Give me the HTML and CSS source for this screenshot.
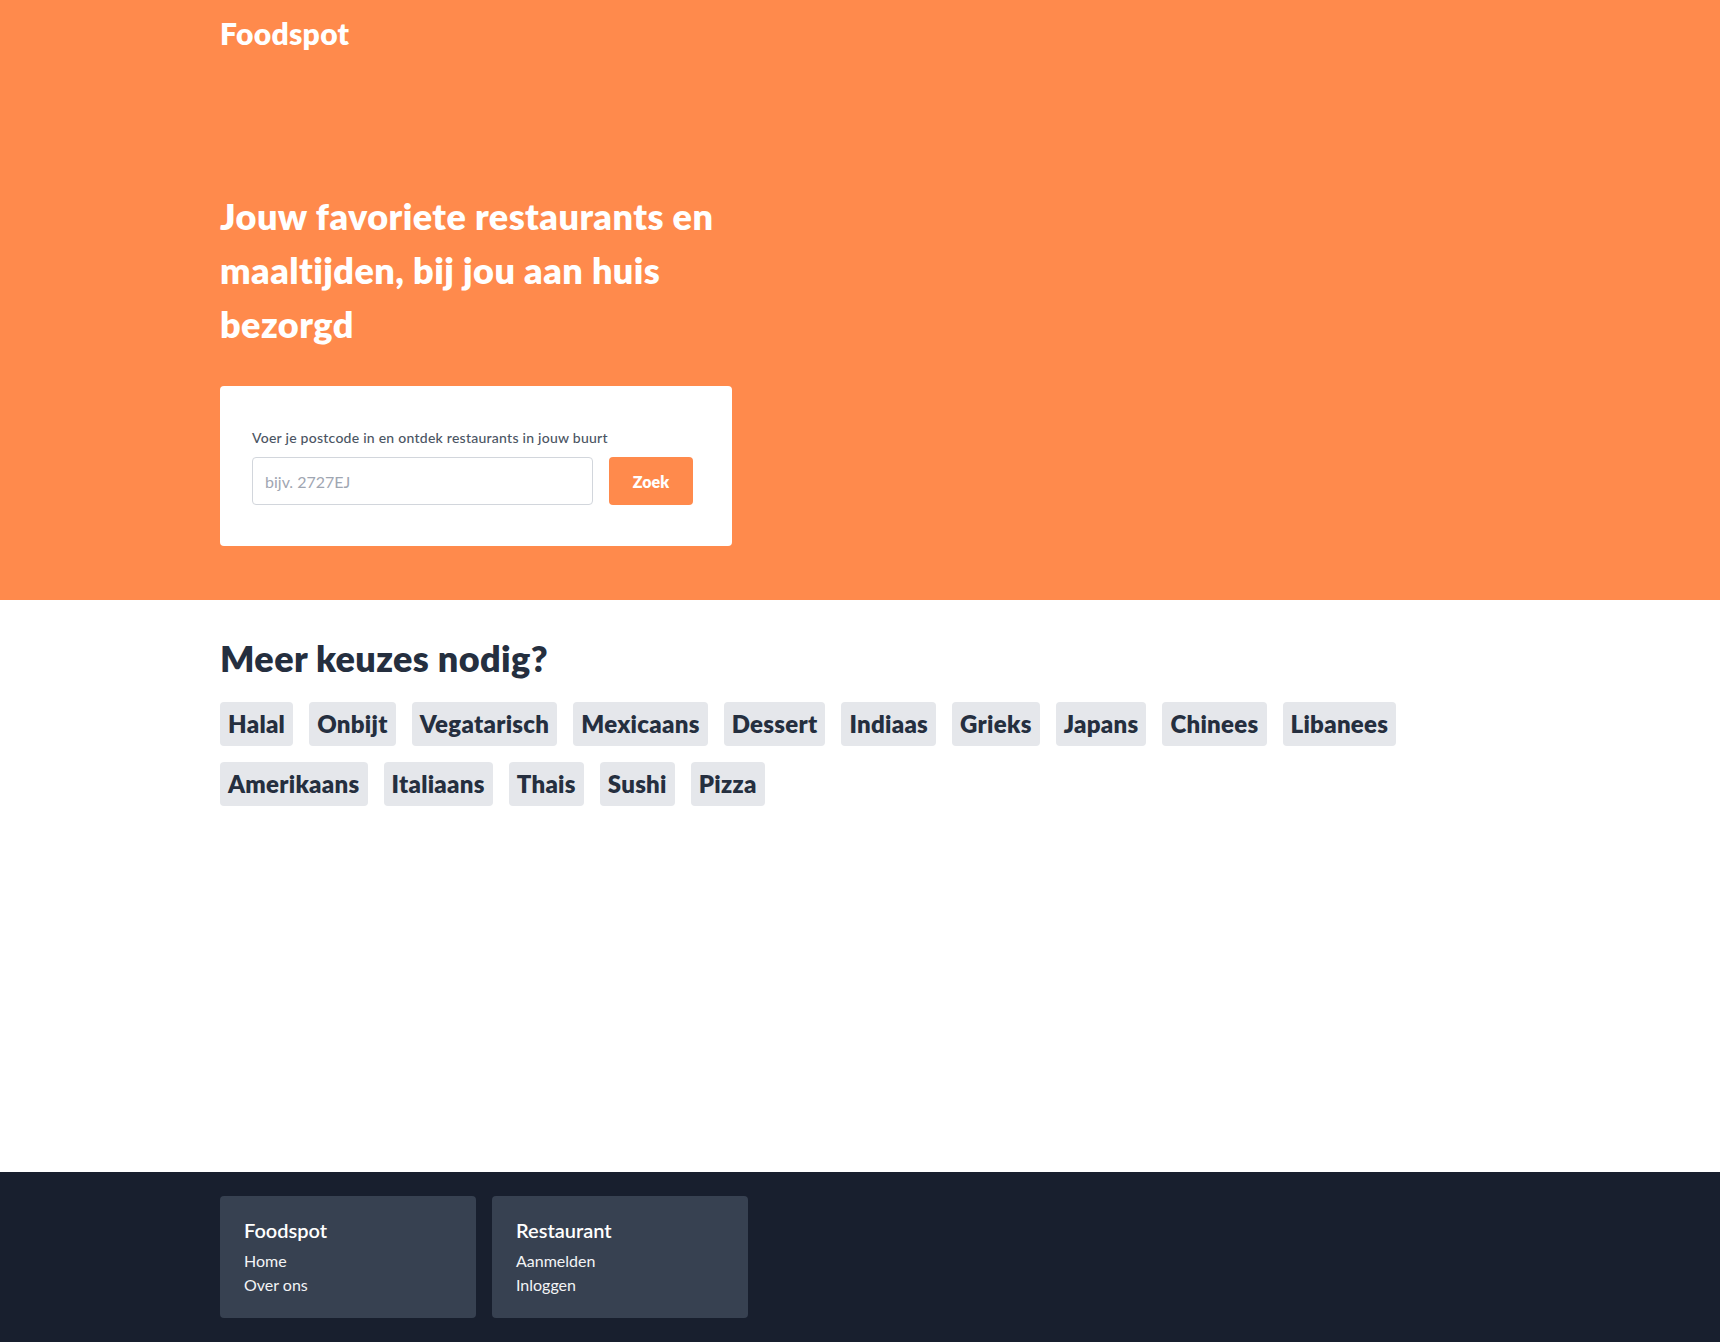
FILE: index.html
```html
<!DOCTYPE html>
<html lang="nl">
<head>
<meta charset="utf-8">
<title>Foodspot</title>
<link rel="stylesheet" href="styles.css">
</head>
<body>
<div class="page">
  <header class="hero">
    <div class="container">
      <div class="logo">Foodspot</div>
      <div class="intro">
        <h1 class="hero-title">Jouw favoriete restaurants en maaltijden, bij jou aan huis bezorgd</h1>
        <form class="search-card">
          <label class="search-label" for="postcode">Voer je postcode in en ontdek restaurants in jouw buurt</label>
          <div class="search-row">
            <input class="search-input" id="postcode" type="text" placeholder="bijv. 2727EJ">
            <button class="search-button" type="button">Zoek</button>
          </div>
        </form>
      </div>
    </div>
  </header>

  <main class="main">
    <div class="container">
      <h2 class="section-title">Meer keuzes nodig?</h2>
      <div class="tags">
        <span class="tag">Halal</span>
        <span class="tag">Onbijt</span>
        <span class="tag">Vegatarisch</span>
        <span class="tag">Mexicaans</span>
        <span class="tag">Dessert</span>
        <span class="tag">Indiaas</span>
        <span class="tag">Grieks</span>
        <span class="tag">Japans</span>
        <span class="tag">Chinees</span>
        <span class="tag">Libanees</span>
        <span class="tag">Amerikaans</span>
        <span class="tag">Italiaans</span>
        <span class="tag">Thais</span>
        <span class="tag">Sushi</span>
        <span class="tag">Pizza</span>
      </div>
    </div>
  </main>

  <footer class="footer">
    <div class="container footer-grid">
      <div class="footer-card">
        <div class="footer-title">Foodspot</div>
        <a class="footer-link" href="#">Home</a>
        <a class="footer-link" href="#">Over ons</a>
      </div>
      <div class="footer-card">
        <div class="footer-title">Restaurant</div>
        <a class="footer-link" href="#">Aanmelden</a>
        <a class="footer-link" href="#">Inloggen</a>
      </div>
    </div>
  </footer>
</div>
</body>
</html>
```

FILE: styles.css
```css
* {
  box-sizing: border-box;
}

html, body {
  margin: 0;
  padding: 0;
}

body {
  font-family: "Lato", "Liberation Sans", sans-serif;
  color: #252f3f;
  background: #ffffff;
}

.page {
  min-height: 100vh;
  display: flex;
  flex-direction: column;
}

.container {
  width: 1280px;
  margin: 0 auto;
}

/* Hero */
.hero {
  background: #ff8a4c;
  padding: 15px 0 54px;
}

.logo {
  color: #ffffff;
  font-size: 30px;
  line-height: 36px;
  font-weight: 800;
  letter-spacing: 0.01em;
}

.intro {
  padding-top: 138px;
}

.hero-title {
  margin: 0;
  max-width: 512px;
  color: #ffffff;
  font-size: 36px;
  line-height: 54px;
  font-weight: 800;
  letter-spacing: 0.012em;
}

.search-card {
  margin-top: 35px;
  width: 512px;
  background: #ffffff;
  border-radius: 4px;
  padding: 42px 39px 41px 32px;
}

.search-label {
  display: block;
  font-size: 14px;
  line-height: 20px;
  font-weight: 500;
  color: #4b5563;
  margin-bottom: 9px;
  letter-spacing: 0.018em;
}

.search-row {
  display: flex;
  gap: 16px;
}

.search-input {
  flex: 1;
  min-width: 0;
  height: 48px;
  border: 1px solid #d2d6dc;
  border-radius: 4px;
  padding: 0 12px;
  font-family: inherit;
  font-size: 16px;
  color: #252f3f;
  outline: none;
}

.search-input::placeholder {
  color: #9fa6b2;
}

.search-button {
  width: 84px;
  height: 48px;
  border: 0;
  border-radius: 4px;
  background: #ff8a4c;
  color: #ffffff;
  font-family: inherit;
  font-size: 16px;
  font-weight: 800;
  cursor: pointer;
}

/* Main */
.main {
  flex: 1;
  padding-top: 38px;
}

.section-title {
  margin: 0 0 24px;
  font-size: 36px;
  line-height: 40px;
  font-weight: 800;
  letter-spacing: 0.01em;
  color: #252f3f;
}

.tags {
  display: flex;
  flex-wrap: wrap;
  gap: 16px;
}

.tag {
  background: #e5e7eb;
  border-radius: 4px;
  padding: 6px 8px;
  font-size: 24px;
  line-height: 32px;
  font-weight: 800;
  letter-spacing: 0.012em;
  color: #252f3f;
}

/* Footer */
.footer {
  background: #181f2e;
  padding: 24px 0;
}

.footer-grid {
  display: flex;
  gap: 16px;
}

.footer-card {
  width: 256px;
  background: #374151;
  border-radius: 4px;
  padding: 20px 24px 21px;
  display: flex;
  flex-direction: column;
}

.footer-title {
  color: #ffffff;
  font-size: 20px;
  line-height: 28px;
  font-weight: 600;
  margin-bottom: 5px;
}

.footer-link {
  color: #f3f4f6;
  font-size: 16px;
  line-height: 24px;
  text-decoration: none;
}
```
